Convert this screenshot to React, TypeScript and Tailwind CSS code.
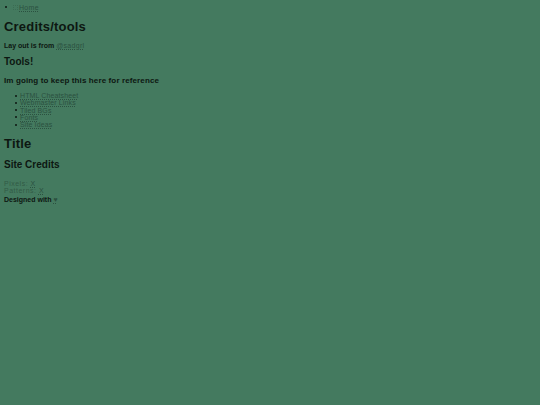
export default function App() {
  const tools = ['HTML Cheatsheet', 'Webmaster Links', 'Tiled BGs', 'Fonts', 'Site Ideas'];
  const link = 'text-[#2b5140] underline decoration-dotted decoration-[#2b5140] underline-offset-1';

  return (
    <div
      className="min-h-[405px] w-full bg-[#447a5f] px-[4px] text-[#0d1711] text-[7px]"
      style={{ fontFamily: '"Liberation Sans", Arial, sans-serif' }}
    >
      <nav className="pt-[3.5px]">
        <div className="flex items-center leading-[7px]">
          <span className="ml-[1px] mr-[6px] inline-block h-[2px] w-[2px] rounded-full bg-[#0d1711]" />
          <span className="mr-[1px] inline-block h-[5px] w-[5px] border border-dotted border-[#3b6c53]" />
          <a className={link + ' tracking-[0.3px]'}>Home</a>
        </div>
      </nav>

      <h1 className="mt-[9px] text-[13px] font-bold leading-[14px] tracking-[0.2px]">Credits/tools</h1>
      <p className="mt-[8px] font-bold leading-[7px]">
        Lay out is from <a className={link + ' font-normal tracking-[0.3px]'}>@sadgrl</a>
      </p>

      <h2 className="mt-[7px] text-[10px] font-bold leading-[11px]">Tools!</h2>
      <h3 className="mt-[10px] text-[8px] font-bold leading-[8px] tracking-[0.12px]">
        Im going to keep this here for reference
      </h3>

      <ul className="mt-[7.5px] pl-[16px] tracking-[0.12px]">
        {tools.map((t) => (
          <li key={t} className="flex items-center leading-[7.25px]">
            <span className="ml-[-5px] mr-[3px] inline-block h-[2px] w-[2px] rounded-full bg-[#0d1711]" />
            <a className={link}>{t}</a>
          </li>
        ))}
      </ul>

      <h1 className="mt-[8.5px] text-[13px] font-bold leading-[14px] tracking-[0.2px]">Title</h1>
      <h2 className="mt-[8px] text-[10px] font-bold leading-[11px]">Site Credits</h2>

      <div className="mt-[10.5px] tracking-[0.5px] text-[#325b46]">
        <p className="leading-[7px]">
          Pixels: <a className={link}>X</a>
        </p>
        <p className="leading-[7px]">
          Patterns: <a className={link}>X</a>
        </p>
      </div>
      <p className="mt-[2px] font-bold leading-[7px]">
        Designed with <a className={link}>♥</a>
      </p>
    </div>
  );
}
